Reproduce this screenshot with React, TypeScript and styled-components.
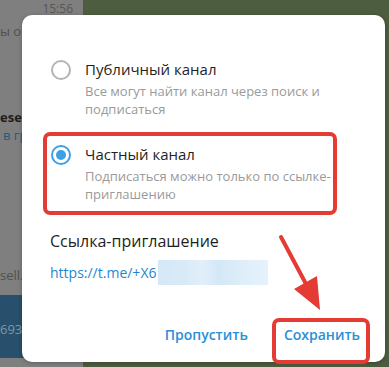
import React from 'react';
import styled, { createGlobalStyle } from 'styled-components';

const GlobalStyle = createGlobalStyle`
  html, body {
    margin: 0;
    padding: 0;
  }
  body {
    font-family: 'Open Sans', 'Noto Sans', sans-serif;
  }
`;

const Page = styled.div`
  position: relative;
  width: 389px;
  height: 367px;
  overflow: hidden;
  display: flex;
`;

/* затемнённый список чатов */
const Sidebar = styled.div`
  width: 83px;
  background: #7f7f7f;
  display: flex;
  flex-direction: column;
  font-size: 13px;
`;

const ChatRow = styled.div<{ $h: number; $pb?: number; $selected?: boolean }>`
  height: ${(p) => p.$h}px;
  flex-shrink: 0;
  background: ${(p) => (p.$selected ? '#284f6b' : 'transparent')};
  display: flex;
  flex-direction: column;
  justify-content: flex-end;
  padding-bottom: ${(p) => p.$pb ?? 6}px;
  box-sizing: border-box;
`;

const Time = styled.div`
  margin-bottom: auto;
  padding: 1px 10px 0 0;
  text-align: right;
  font-size: 12px;
  line-height: 16px;
  color: #575757;
`;

const RowText = styled.div<{ $tone: 'name' | 'preview' | 'link' | 'selected' }>`
  font-size: 13px;
  line-height: 18px;
  white-space: nowrap;
  padding-left: ${(p) => (p.$tone === 'link' ? 3 : 0)}px;
  font-weight: ${(p) => (p.$tone === 'name' ? 700 : 400)};
  color: ${(p) =>
    p.$tone === 'name' ? '#1d1d1d' : p.$tone === 'link' ? '#265a7e' : p.$tone === 'selected' ? '#7d98aa' : '#505050'};
`;

const ChatArea = styled.div`
  flex: 1;
  background: #4d5d3f;
`;

const Dialog = styled.div`
  position: absolute;
  left: 22px;
  top: 15px;
  width: 363px;
  height: 347px;
  background: #fff;
  border-radius: 10px;
  box-shadow: 0 1px 4px rgba(0, 0, 0, 0.25);
  box-sizing: border-box;
  padding: 44px 13px 0 29px;
  display: flex;
  flex-direction: column;
  color: #222;
`;

const Options = styled.div`
  display: flex;
  flex-direction: column;
  gap: 26px;
`;

const Option = styled.div`
  display: grid;
  grid-template-columns: 20px 1fr;
  column-gap: 14px;
  align-items: start;
`;

const Radio = styled.span<{ $checked?: boolean }>`
  width: 20px;
  height: 20px;
  margin-top: 1px;
  border-radius: 50%;
  box-sizing: border-box;
  border: 2px solid ${(p) => (p.$checked ? '#3ea0e4' : '#b4b4b4')};
  display: flex;
  align-items: center;
  justify-content: center;

  &::after {
    content: '';
    display: ${(p) => (p.$checked ? 'block' : 'none')};
    width: 10px;
    height: 10px;
    border-radius: 50%;
    background: #3ea0e4;
  }
`;

const OptionText = styled.div`
  display: flex;
  flex-direction: column;
  gap: 3px;
`;

const Label = styled.div`
  font-size: 15px;
  line-height: 20px;
  color: #1f1f1f;
`;

const Hint = styled.div`
  font-size: 13px;
  line-height: 18px;
  color: #9a9a9a;
  padding-right: 30px;
`;

const LinkTitle = styled.div`
  margin-top: 27px;
  margin-left: -1px;
  font-size: 16px;
  line-height: 22px;
  color: #1f1f1f;
`;

const LinkRow = styled.div`
  margin-top: 8px;
  margin-left: -1px;
  display: flex;
  align-items: center;
  height: 25px;
`;

const LinkText = styled.span`
  font-size: 14px;
  line-height: 20px;
  color: #1c87d0;
`;

const Blur = styled.span`
  width: 110px;
  height: 25px;
  margin-left: 2px;
  background: linear-gradient(
    90deg,
    #d5e8f6 0%,
    #d9eaf7 25%,
    #e2effa 40%,
    #d4e7f6 55%,
    #ddeef9 75%,
    #e6f2fb 100%
  );
`;

const Footer = styled.div`
  margin-top: auto;
  margin-bottom: 9px;
  display: flex;
  justify-content: flex-end;
  gap: 12px;
`;

const TextButton = styled.button`
  border: none;
  background: transparent;
  padding: 8px 12px;
  font-family: 'Open Sans', 'Noto Sans', sans-serif;
  font-size: 14px;
  line-height: 20px;
  font-weight: 600;
  color: #2a8fd6;
  cursor: pointer;
`;

/* красные пометки поверх скриншота */
const Mark = styled.div<{ $x: number; $y: number; $w: number; $h: number }>`
  position: absolute;
  left: ${(p) => p.$x}px;
  top: ${(p) => p.$y}px;
  width: ${(p) => p.$w}px;
  height: ${(p) => p.$h}px;
  box-sizing: border-box;
  border: 4px solid #e53b35;
  border-radius: 7px;
  pointer-events: none;
`;

const ArrowSvg = styled.svg`
  position: absolute;
  left: 0;
  top: 0;
  pointer-events: none;
`;

const App: React.FC = () => {
  return (
    <>
      <GlobalStyle />
      <Page>
        <Sidebar>
          <ChatRow $h={46}>
            <Time>15:56</Time>
            <RowText $tone={'preview'}>ы о</RowText>
          </ChatRow>
          <ChatRow $h={108} $pb={10}>
            <RowText $tone={'name'}>esel</RowText>
            <RowText $tone={'link'}>в гр</RowText>
          </ChatRow>
          <ChatRow $h={141} $pb={11}>
            <RowText $tone={'preview'}>sell.</RowText>
          </ChatRow>
          <ChatRow $h={63} $pb={20} $selected>
            <RowText $tone={'selected'}>693</RowText>
          </ChatRow>
        </Sidebar>
        <ChatArea />

        <Dialog>
          <Options>
            <Option>
              <Radio />
              <OptionText>
                <Label>Публичный канал</Label>
                <Hint>Все могут найти канал через поиск и подписаться</Hint>
              </OptionText>
            </Option>
            <Option>
              <Radio $checked />
              <OptionText>
                <Label>Частный канал</Label>
                <Hint>Подписаться можно только по ссылке-приглашению</Hint>
              </OptionText>
            </Option>
          </Options>

          <LinkTitle>Ссылка-приглашение</LinkTitle>
          <LinkRow>
            <LinkText>https://t.me/+X6</LinkText>
            <Blur />
          </LinkRow>

          <Footer>
            <TextButton>Пропустить</TextButton>
            <TextButton>Сохранить</TextButton>
          </Footer>
        </Dialog>

        <Mark $x={43} $y={132} $w={294} $h={83} />
        <Mark $x={272} $y={318} $w={98} $h={46} />
        <ArrowSvg width={389} height={367} viewBox="0 0 389 367">
          <line x1={281} y1={237} x2={306} y2={284} stroke="#e53b35" strokeWidth={4} strokeLinecap="round" />
          <polygon points="320,310 317,276 294,289" fill="#e53b35" />
        </ArrowSvg>
      </Page>
    </>
  );
};

export default App;
